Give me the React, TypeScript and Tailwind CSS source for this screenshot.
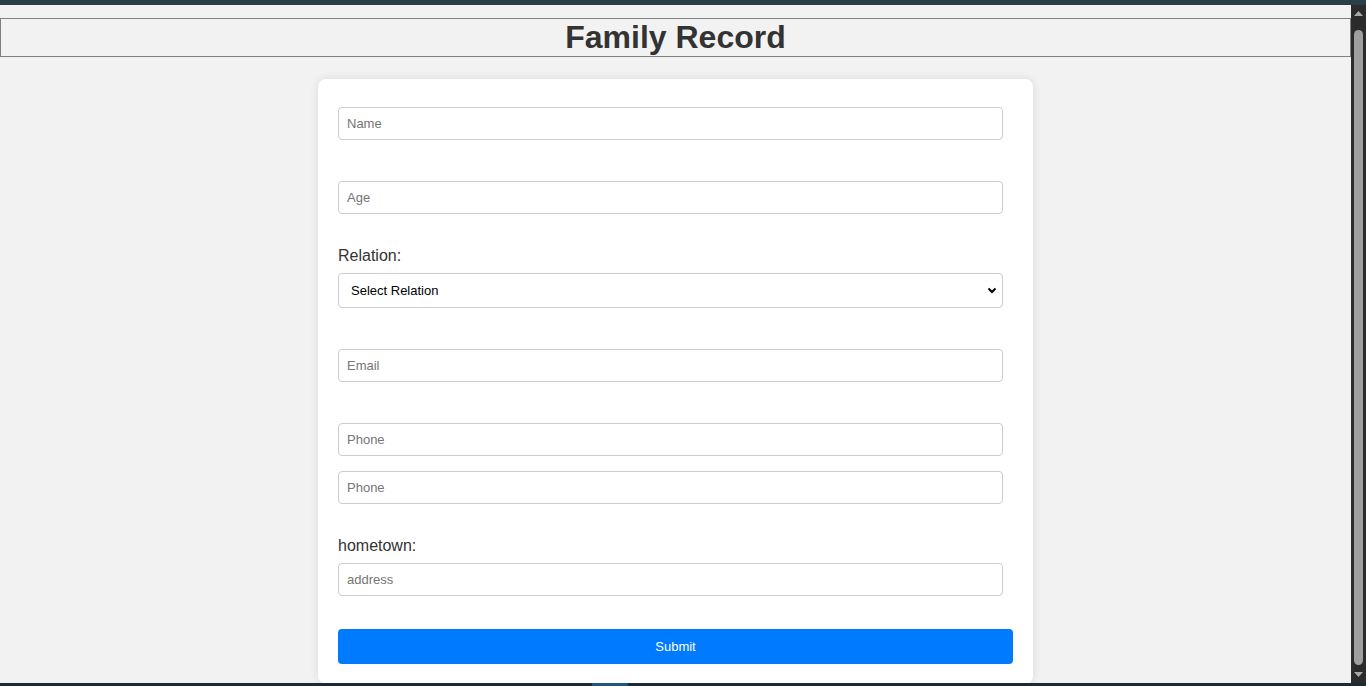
import React from "react";

function Field({ placeholder, className = "" }: { placeholder: string; className?: string }) {
  return (
    <input
      type="text"
      placeholder={placeholder}
      className={`block w-[665px] h-[33px] border border-[#cccccc] rounded-[4px] bg-white pl-[8px] text-[13px] text-[#333] placeholder:text-[#757575] outline-none ${className}`}
    />
  );
}

export default function App() {
  return (
    <div
      className="w-[1366px] h-[686px] overflow-hidden flex flex-col bg-[#f2f2f2]"
      style={{ fontFamily: '"Liberation Sans", Arial, sans-serif' }}
    >
      <div className="h-[5px] shrink-0 bg-[#2b3f46]" />
      <div className="flex flex-1 min-h-0">
        <div className="flex-1 min-w-0 flex flex-col pt-[13px]">
          <div className="h-[39px] border border-[#808080] flex items-center justify-center">
            <h1 className="text-[32px] leading-[37px] font-bold text-[#333]">Family Record</h1>
          </div>
          <div className="mt-[22px] mx-auto w-[715px] bg-white rounded-[8px] shadow-[0_0_10px_rgba(0,0,0,0.1)] pt-[28px] pb-[20px] px-[20px]">
            <Field placeholder="Name" />
            <Field placeholder="Age" className="mt-[41px]" />
            <label className="block mt-[33px] text-[16px] leading-[18px] text-[#333]">Relation:</label>
            <div className="relative mt-[8px] w-[665px]">
              <select className="appearance-none block w-full h-[35px] border border-[#cccccc] rounded-[4px] bg-white pl-[12px] text-[13px] text-black outline-none">
                <option>Select Relation</option>
              </select>
              <svg
                className="absolute right-[6px] top-[14px] pointer-events-none"
                width="10"
                height="7"
                viewBox="0 0 10 7"
              >
                <path d="M1.5 1.5 L5 5 L8.5 1.5" fill="none" stroke="#000" strokeWidth="2" />
              </svg>
            </div>
            <Field placeholder="Email" className="mt-[41px]" />
            <Field placeholder="Phone" className="mt-[41px]" />
            <Field placeholder="Phone" className="mt-[15px]" />
            <label className="block mt-[33px] text-[16px] leading-[18px] text-[#333]">hometown:</label>
            <Field placeholder="address" className="mt-[8px]" />
            <button className="mt-[33px] block w-[675px] h-[35px] rounded-[4px] bg-[#007bff] text-white text-[13px]">
              Submit
            </button>
          </div>
        </div>
        <div className="w-[15px] shrink-0 bg-[#2b2b2b] flex flex-col items-center">
          <svg className="mt-[6px]" width="9" height="5" viewBox="0 0 9 5">
            <path d="M0 5 L4.5 0 L9 5 Z" fill="#a8a8a8" />
          </svg>
          <div className="mt-[14px] w-[9px] h-[635px] rounded-full bg-[#9f9f9f]" />
          <svg className="mt-[7px]" width="9" height="5" viewBox="0 0 9 5">
            <path d="M0 0 L9 0 L4.5 5 Z" fill="#a8a8a8" />
          </svg>
        </div>
      </div>
      <div className="h-[3px] shrink-0 bg-[#1b2a33] flex">
        <div className="ml-[592px] w-[36px] bg-[#1d5680]" />
      </div>
    </div>
  );
}
